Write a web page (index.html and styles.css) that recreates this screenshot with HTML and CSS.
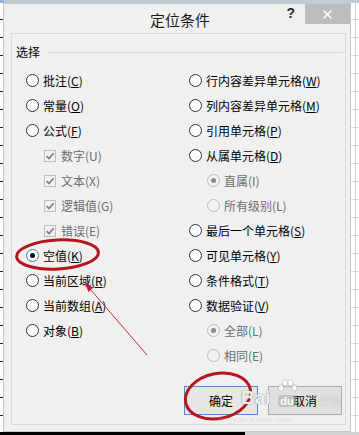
FILE: index.html
```html
<!DOCTYPE html>
<html>
<head>
<meta charset="utf-8">
<title>定位条件</title>
<link rel="stylesheet" href="styles.css">
</head>
<body>
<div class="screen">
  <div class="topstrip"></div>
  <div class="middle">
    <div class="gridleft"></div>
    <div class="dialog">
      <div class="titlebar">
        <div class="title">定位条件</div>
        <div class="controls">
          <span class="help">?</span>
          <span class="close"><svg width="9" height="9" viewBox="0 0 9 9"><path d="M0.5 0.5 L8.5 8.5 M8.5 0.5 L0.5 8.5" stroke="#fff" stroke-width="1.4" fill="none"/></svg></span>
        </div>
      </div>
      <div class="panel">
        <div class="legend"><span class="legend-text">选择</span><span class="legend-line"></span></div>
        <div class="columns">
          <div class="col col-left">
            <div class="opt"><span class="radio"></span><span class="lbl">批注(<u>C</u>)</span></div>
            <div class="opt"><span class="radio"></span><span class="lbl">常量(<u>O</u>)</span></div>
            <div class="opt"><span class="radio"></span><span class="lbl">公式(<u>F</u>)</span></div>
            <div class="opt sub cb disabled"><span class="check"><svg width="10" height="10" viewBox="0 0 10 10"><path d="M1.6 5.2 L4 7.6 L8.6 2.2" stroke="#7d7d7d" stroke-width="1.7" fill="none"/></svg></span><span class="lbl">数字(U)</span></div>
            <div class="opt sub cb disabled"><span class="check"><svg width="10" height="10" viewBox="0 0 10 10"><path d="M1.6 5.2 L4 7.6 L8.6 2.2" stroke="#7d7d7d" stroke-width="1.7" fill="none"/></svg></span><span class="lbl">文本(X)</span></div>
            <div class="opt sub cb disabled"><span class="check"><svg width="10" height="10" viewBox="0 0 10 10"><path d="M1.6 5.2 L4 7.6 L8.6 2.2" stroke="#7d7d7d" stroke-width="1.7" fill="none"/></svg></span><span class="lbl">逻辑值(G)</span></div>
            <div class="opt sub cb disabled"><span class="check"><svg width="10" height="10" viewBox="0 0 10 10"><path d="M1.6 5.2 L4 7.6 L8.6 2.2" stroke="#7d7d7d" stroke-width="1.7" fill="none"/></svg></span><span class="lbl">错误(E)</span></div>
            <div class="opt"><span class="radio on focus"></span><span class="lbl">空值(<u>K</u>)</span></div>
            <div class="opt"><span class="radio"></span><span class="lbl">当前区域(<u>R</u>)</span></div>
            <div class="opt"><span class="radio"></span><span class="lbl">当前数组(<u>A</u>)</span></div>
            <div class="opt"><span class="radio"></span><span class="lbl">对象(<u>B</u>)</span></div>
          </div>
          <div class="col col-right">
            <div class="opt"><span class="radio"></span><span class="lbl">行内容差异单元格(<u>W</u>)</span></div>
            <div class="opt"><span class="radio"></span><span class="lbl">列内容差异单元格(<u>M</u>)</span></div>
            <div class="opt"><span class="radio"></span><span class="lbl">引用单元格(<u>P</u>)</span></div>
            <div class="opt"><span class="radio"></span><span class="lbl">从属单元格(<u>D</u>)</span></div>
            <div class="opt sub disabled"><span class="radio on"></span><span class="lbl">直属(I)</span></div>
            <div class="opt sub disabled"><span class="radio"></span><span class="lbl">所有级别(L)</span></div>
            <div class="opt"><span class="radio"></span><span class="lbl">最后一个单元格(<u>S</u>)</span></div>
            <div class="opt"><span class="radio"></span><span class="lbl">可见单元格(<u>Y</u>)</span></div>
            <div class="opt"><span class="radio"></span><span class="lbl">条件格式(<u>T</u>)</span></div>
            <div class="opt"><span class="radio"></span><span class="lbl">数据验证(<u>V</u>)</span></div>
            <div class="opt sub disabled"><span class="radio on"></span><span class="lbl">全部(L)</span></div>
            <div class="opt sub disabled"><span class="radio"></span><span class="lbl">相同(E)</span></div>
          </div>
        </div>
        <div class="buttons">
          <div class="btn btn-default">确定</div>
          <div class="btn">取消</div>
        </div>
      </div>
    </div>
    <div class="gridright"></div>
  </div>
  <div class="bottombar"><div class="bar-black"></div><div class="bar-rest"></div></div>

  <svg class="annotations" width="359" height="435" viewBox="0 0 359 435">
    <ellipse cx="57.5" cy="254.5" rx="41" ry="14.5" transform="rotate(-3 57.5 254.5)" fill="none" stroke="#b5161d" stroke-width="3"/>
    <ellipse cx="218" cy="396" rx="33" ry="22.5" transform="rotate(-12 218 396)" fill="none" stroke="#b5161d" stroke-width="3"/>
    <path d="M90.5 289.5 L147 355" stroke="#c9303a" stroke-width="1" fill="none"/>
    <path d="M85 283 L93.4 287.6 L88.4 291.9 Z" fill="#c41e2a"/>
  </svg>

  <div class="watermark">
    <span class="wm-bai">Bai</span>
    <span class="wm-du">
      <svg class="wm-paw" width="21" height="17" viewBox="0 0 21 17">
        <g fill="rgba(255,255,255,0.85)" stroke="rgba(150,150,150,0.55)" stroke-width="0.8">
          <ellipse cx="4" cy="9" rx="2.6" ry="3.2"/>
          <ellipse cx="8" cy="4" rx="2.6" ry="3.2"/>
          <ellipse cx="13.5" cy="4" rx="2.6" ry="3.2"/>
          <ellipse cx="17.5" cy="9" rx="2.6" ry="3.2"/>
        </g>
      </svg>
      <span class="wm-du-text">du</span>
    </span>
    <span class="wm-jy">经验</span>
    <span class="wm-url">jingyan.baidu.com</span>
  </div>
</div>
</body>
</html>
```

FILE: styles.css
```css
* {
  box-sizing: border-box;
}

html,
body {
  margin: 0;
  padding: 0;
}

body {
  width: 359px;
  height: 435px;
  overflow: hidden;
  background: #ffffff;
  font-family: "Noto Sans CJK SC", "Noto Sans", sans-serif;
  font-size: 12px;
  color: #000000;
}

.screen {
  position: relative;
  width: 359px;
  height: 435px;
  display: flex;
  flex-direction: column;
}

.topstrip {
  height: 3px;
  background: linear-gradient(to right, #8fb6dc 0 4px, #c4cbd2 4px);
}

.middle {
  display: flex;
  height: 429px;
}

.gridleft {
  width: 3px;
  background: repeating-linear-gradient(to bottom, #ffffff 0 16px, #1e1e1e 16px 17px, #ffffff 17px 18px);
}

.gridright {
  flex: 1;
  background:
    linear-gradient(to right, transparent 0 4px, #d4d4d4 4px 5px, transparent 5px),
    repeating-linear-gradient(to bottom, #ffffff 0 16px, #dcdcdc 16px 17px, #ffffff 17px 18px);
}

.dialog {
  width: 348px;
  height: 429px;
  border: 1px solid #c6c6c6;
  background: #f0f0f0;
  display: flex;
  flex-direction: column;
}

.titlebar {
  height: 29px;
  display: grid;
  grid-template-columns: 1fr auto 1fr;
  padding-left: 6px;
}

.title {
  grid-column: 2;
  font-size: 15px;
  line-height: 29px;
  padding-top: 1px;
  color: #1a1a1a;
}

.controls {
  grid-column: 3;
  justify-self: end;
  display: flex;
  align-items: flex-start;
}

.help {
  font-family: "Liberation Sans", sans-serif;
  font-weight: bold;
  font-size: 14px;
  line-height: 14px;
  margin-top: 2px;
  margin-right: 10px;
  color: #2a2a2a;
}

.close {
  width: 45px;
  height: 20px;
  background: #bcbcbc;
  display: flex;
  align-items: center;
  justify-content: center;
}

.panel {
  margin: 0 4px 0 7px;
  height: 392px;
  border: 1px solid #d8d8d8;
  padding: 7px 1px 9px 4px;
  display: flex;
  flex-direction: column;
}

.legend {
  height: 22px;
  display: flex;
  align-items: center;
}

.legend-text {
  line-height: 22px;
}

.legend-line {
  flex: 1;
  height: 1px;
  background: #d6d6d6;
  margin: 0 1px 0 7px;
}

.columns {
  display: flex;
  margin-top: 5px;
  padding-left: 10px;
}

.col-left {
  width: 163px;
}

.col-right {
  flex: 1;
}

.opt {
  height: 25px;
  display: flex;
  align-items: center;
  gap: 4px;
  white-space: nowrap;
}

.opt.sub {
  padding-left: 18px;
}

.opt.cb {
  gap: 5px;
}

.lbl {
  line-height: 25px;
}

.lbl u {
  text-decoration: underline;
  text-underline-offset: 1px;
}

.radio {
  flex: none;
  width: 13px;
  height: 13px;
  border-radius: 50%;
  border: 1px solid #333333;
  background: #ffffff;
  display: flex;
  align-items: center;
  justify-content: center;
}

.radio.on::after {
  content: "";
  width: 5px;
  height: 5px;
  border-radius: 50%;
  background: #111111;
}

.radio.focus {
  border-color: #3a7fc4;
}

.check {
  flex: none;
  width: 12px;
  height: 12px;
  border: 1px solid #bdbdbd;
  background: #f2f2f2;
  display: flex;
  align-items: center;
  justify-content: center;
}

.disabled .lbl {
  color: #6d6d6d;
}

.disabled .radio {
  border-color: #bcbcbc;
  background: #f2f2f2;
}

.disabled .radio.on::after {
  background: #8a8a8a;
}

.buttons {
  display: flex;
  justify-content: flex-end;
  gap: 10px;
  margin-top: 18px;
  padding-right: 2px;
}

.btn {
  width: 74px;
  height: 29px;
  border: 1px solid #adadad;
  background: #e1e1e1;
  display: flex;
  align-items: center;
  justify-content: center;
}

.btn-default {
  border-color: #4a8ccc;
  background: #e6e6e6;
}

.bottombar {
  height: 3px;
  display: flex;
}

.bar-black {
  width: 245px;
  background: #000000;
}

.bar-rest {
  flex: 1;
  background: #d2d2d2;
}

.annotations {
  position: absolute;
  left: 0;
  top: 0;
  pointer-events: none;
}

.watermark {
  position: absolute;
  left: 241px;
  top: 378px;
  width: 110px;
  height: 46px;
  pointer-events: none;
}

.wm-bai {
  position: absolute;
  left: 0;
  top: 9px;
  font-family: "Liberation Sans", sans-serif;
  font-weight: bold;
  font-size: 19px;
  line-height: 22px;
  color: rgba(255, 255, 255, 0.9);
  text-shadow: 0 0 1px rgba(120, 120, 120, 0.7), 0 0 1px rgba(120, 120, 120, 0.7);
}

.wm-du {
  position: absolute;
  left: 36px;
  top: 1px;
  width: 21px;
  height: 30px;
}

.wm-paw {
  display: block;
}

.wm-du-text {
  position: absolute;
  left: 1px;
  top: 16px;
  width: 18px;
  height: 12px;
  border-radius: 3px;
  background: rgba(170, 170, 170, 0.55);
  font-family: "Liberation Sans", sans-serif;
  font-weight: bold;
  font-size: 11px;
  line-height: 12px;
  text-align: center;
  color: rgba(255, 255, 255, 0.95);
}

.wm-jy {
  position: absolute;
  left: 78px;
  top: 15px;
  font-size: 11px;
  line-height: 14px;
  color: rgba(235, 235, 235, 0.75);
  text-shadow: 0 0 1px rgba(140, 140, 140, 0.5);
}

.wm-url {
  position: absolute;
  left: -23px;
  top: 37px;
  font-family: "Liberation Sans", sans-serif;
  font-size: 8px;
  line-height: 9px;
  letter-spacing: 0.6px;
  color: rgba(200, 200, 200, 0.5);
}
```
